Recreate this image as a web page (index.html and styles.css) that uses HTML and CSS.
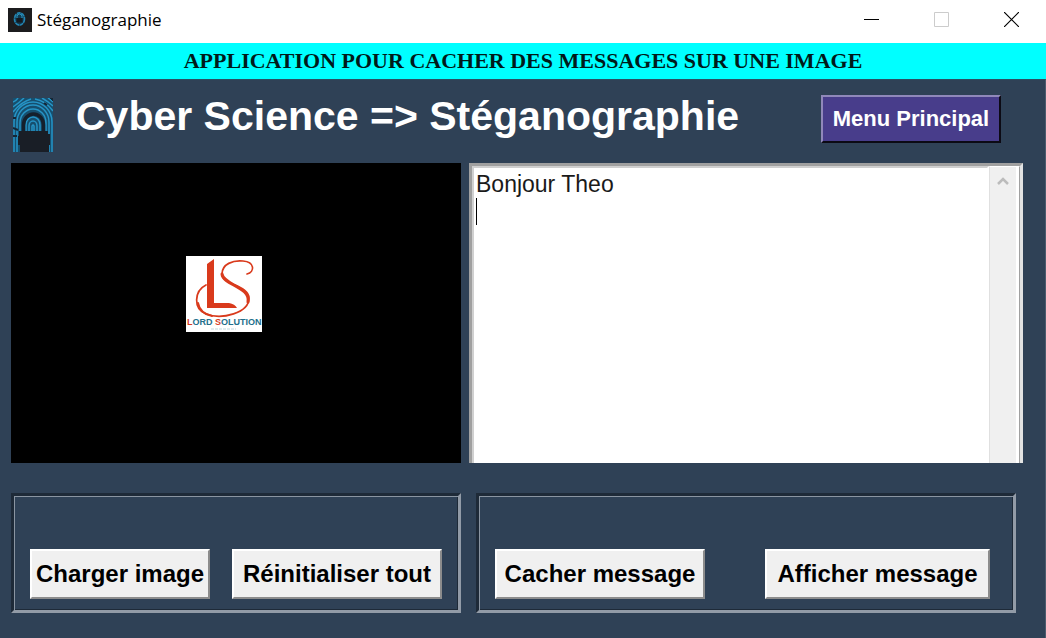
FILE: index.html
```html
<!DOCTYPE html>
<html lang="fr">
<head>
<meta charset="utf-8">
<title>Stéganographie</title>
<link rel="stylesheet" href="styles.css">
</head>
<body>
<div class="window">
  <header class="titlebar">
    <svg class="app-icon" viewBox="0 0 24 24" aria-hidden="true">
      <rect width="24" height="24" fill="#1c1c1e"/>
      <ellipse cx="11.5" cy="11" rx="5" ry="6.2" fill="#123a52" stroke="#2386b4" stroke-width="1.6" stroke-dasharray="4 .6"/>
      <path d="M9 10V8.500a2.500 2.500 0 0 1 5 0V10" fill="none" stroke="#2f9fcb" stroke-width="1"/>
      <rect x="8.500" y="10" width="6" height="4.500" fill="#15191f"/>
    </svg>
    <span class="window-title">Stéganographie</span>
    <div class="window-controls">
      <button class="control" type="button" aria-label="Réduire">
        <svg viewBox="0 0 15 15"><path d="M0 7.500h15" stroke="#000"/></svg>
      </button>
      <button class="control" type="button" aria-label="Agrandir" disabled>
        <svg viewBox="0 0 15 15"><path d="M.5 .5h14v14H.5z" fill="none" stroke="#ccc"/></svg>
      </button>
      <button class="control" type="button" aria-label="Fermer">
        <svg viewBox="0 0 15 15"><path d="M0 0l15 15M15 0L0 15" stroke="#000" stroke-width="1.200"/></svg>
      </button>
    </div>
  </header>

  <p class="banner">APPLICATION POUR CACHER DES MESSAGES SUR UNE IMAGE</p>

  <main class="content">
    <div class="heading">
      <svg class="lock-logo" viewBox="0 0 40 54" aria-hidden="true">
        <rect width="40" height="54" fill="#164f6e"/>
        <g fill="none" stroke="#2694c6" stroke-width="1.500">
          <path d="M0 4Q3 3 5 0M0 9Q6 5 11 0M0 14Q8 4 18 1M22 1Q33 3 40 13M29 0Q36 4 40 8M35 0Q38 2 40 4"/>
          <path d="M1 54V24a19 20 0 0 1 38 0V54"/>
          <path d="M4 54V24a16 17 0 0 1 32 0V54"/>
          <path d="M7 34V25a13 14 0 0 1 26 0V34"/>
          <path d="M13 34V27a7 8 0 0 1 14 0V34M16 34V28a4 5 0 0 1 8 0V34M19 34V28q1-2 2 0V34"/>
        </g>
        <path d="M0 20h3M31 5l3 2M37 0h3v3M0 38h4M0 30l5 2" stroke="#142636" stroke-width="2"/>
        <path d="M10.500 34V27a9.500 10.500 0 0 1 20 0V34" fill="none" stroke="#15202c" stroke-width="3.500"/>
        <path d="M6 33h29v3h2v11h-1v7H7v-7H5v-9h1z" fill="#191e26"/>
      </svg>
      <h1 class="app-name">Cyber Science =&gt; Stéganographie</h1>
      <button class="menu-button" type="button">Menu Principal</button>
    </div>

    <div class="panels">
      <div class="preview">
        <svg class="preview-image" viewBox="0 0 76 76" role="img" aria-label="Lord Solution">
          <rect width="76" height="76" fill="#fff"/>
          <g fill="none" stroke="#d93a1c" stroke-linecap="round">
            <path d="M20 29C8 35 7 53 20 58C36 64 63 57 63 42C63 29 36 29 36 18C36 8 47 4 57 5C69 6 69 16 61 18" stroke-width="1.700"/>
            <path d="M62 46C65 31 37 29 36 18" stroke-width="3"/>
            <path d="M12 47C13 53 17 58 26 60" stroke-width="2"/>
          </g>
          <path d="M21 8L28 3V47H43Q49 48 51 52H21z" fill="#d93a1c"/>
          <text class="logo-text" x="1" y="69"><tspan class="logo-initial">L</tspan>ORD <tspan class="logo-initial">S</tspan>OLUTION</text>
          <path d="M25 73h25" stroke="#c3d9df" stroke-dasharray="3 1"/>
        </svg>
      </div>
      <div class="editor">
        <textarea class="message" aria-label="Message" spellcheck="false">Bonjour Theo
</textarea>
        <span class="caret"></span>
        <div class="scrollbar">
          <button class="scroll-up" type="button" aria-label="Défiler vers le haut">
            <svg viewBox="0 0 12 10"><path d="M1 8l5-5 5 5" fill="none" stroke="#bcbcbc" stroke-width="2.500"/></svg>
          </button>
        </div>
      </div>
    </div>

    <div class="groups">
      <div class="group">
        <button class="action action-narrow" type="button">Charger image</button>
        <button class="action" type="button">Réinitialiser tout</button>
      </div>
      <div class="group">
        <button class="action" type="button">Cacher message</button>
        <button class="action action-wide" type="button">Afficher message</button>
      </div>
    </div>
  </main>
</div>
</body>
</html>
```

FILE: styles.css
```css
* {
  box-sizing: border-box;
}

body {
  margin: 0;
  background: #2f4156;
  font-family: "Liberation Sans", Arial, sans-serif;
}

button {
  font: inherit;
  cursor: pointer;
}

.window {
  display: flex;
  flex-direction: column;
  min-height: 100vh;
}

.titlebar {
  display: flex;
  align-items: center;
  height: 43px;
  padding: 0 0 4px 8px;
  background: #fff;
}

.app-icon {
  width: 24px;
  height: 24px;
}

.window-title {
  margin-left: 5px;
  font: 17px/24px "Open Sans", "Noto Sans", sans-serif;
  color: #000;
}

.window-controls {
  display: flex;
  margin-left: auto;
}

.control {
  display: grid;
  place-items: center;
  width: 70px;
  height: 39px;
  padding: 0;
  border: 0;
  background: none;
}

.control svg {
  width: 15px;
  height: 15px;
}

.banner {
  margin: 0;
  height: 36px;
  background: #00ffff;
  color: #001a1a;
  font: bold 22px/36px "Liberation Serif", "Times New Roman", serif;
  text-align: center;
  white-space: nowrap;
}

.content {
  flex: 1;
  padding: 0 22px 26px 11px;
  border-top: 1px solid #2a5064;
  border-right: 1px solid #4c5c6e;
}

.heading {
  display: flex;
  align-items: center;
  height: 83px;
  padding: 0 22px 5px 2px;
}

.lock-logo {
  flex: none;
  width: 40px;
  height: 54px;
  margin-top: 12px;
}

.app-name {
  margin: 0 auto 6px 23px;
  color: #fff;
  font-size: 41px;
  line-height: 48px;
  white-space: nowrap;
}

.menu-button {
  width: 180px;
  height: 48px;
  padding: 0;
  border: 2px solid;
  border-color: #9088ba #0c0a14 #0c0a14 #9088ba;
  background: #483d8b;
  color: #fff;
  font-size: 22px;
  font-weight: bold;
  white-space: nowrap;
}

.panels {
  display: grid;
  grid-template-columns: 450fr 554fr;
  gap: 8px;
  height: 300px;
}

.preview {
  display: grid;
  place-items: center;
  padding: 0 24px 38px 0;
  background: #000;
}

.preview-image {
  width: 76px;
  height: 76px;
}

.logo-text {
  fill: #236f8c;
  font: bold 9px "Liberation Sans", Arial, sans-serif;
}

.logo-initial {
  fill: #d93a1c;
}

.editor {
  position: relative;
  display: flex;
  border-style: solid;
  border-width: 3px 3px 0 3px;
  border-color: #a0a0a0 #e3e3e3 #e3e3e3 #a0a0a0;
  background: #fff;
}

.message {
  flex: 1;
  min-width: 0;
  padding: 3px 0 0 2px;
  border: 2px solid;
  border-color: #d0d0d0 #fff #fff #d0d0d0;
  border-bottom: 0;
  outline: 0;
  background: #fff;
  color: #1a1a1a;
  font: 23px/27px "Liberation Sans", Arial, sans-serif;
  resize: none;
  overflow: hidden;
}

.caret {
  position: absolute;
  top: 32px;
  left: 4px;
  width: 1px;
  height: 27px;
  background: #000;
}

.scrollbar {
  width: 31px;
  border-top: 1px solid #fff;
  border-left: 1px solid #e0e0e0;
  border-right: 1px solid #a0a0a0;
  background: linear-gradient(to right, #f0f0f0 26px, #fff 26px);
}

.scroll-up {
  display: grid;
  place-items: center;
  width: 26px;
  height: 28px;
  padding: 0;
  border: 0;
  background: none;
}

.scroll-up svg {
  width: 12px;
  height: 10px;
}

.groups {
  display: grid;
  grid-template-columns: 450fr 540fr;
  gap: 15px;
  margin-top: 30px;
  padding-right: 7px;
}

.group {
  display: flex;
  align-items: flex-end;
  justify-content: space-between;
  height: 120px;
  padding: 0 16px 11px 16px;
  border: 3px solid;
  border-color: #1e2a38 #929ba7 #929ba7 #1e2a38;
  box-shadow: inset 1px 1px #8a95a2, inset -1px -1px #1e2a38;
}

.group + .group {
  padding-right: 23px;
}

.action {
  width: 210px;
  height: 50px;
  padding: 0;
  border: 2px solid;
  border-color: #fff #8c8c8c #8c8c8c #fff;
  background: #f0f0f0;
  color: #000;
  font-size: 24px;
  font-weight: bold;
  white-space: nowrap;
}

.action-narrow {
  width: 180px;
}

.action-wide {
  width: 225px;
}
```
